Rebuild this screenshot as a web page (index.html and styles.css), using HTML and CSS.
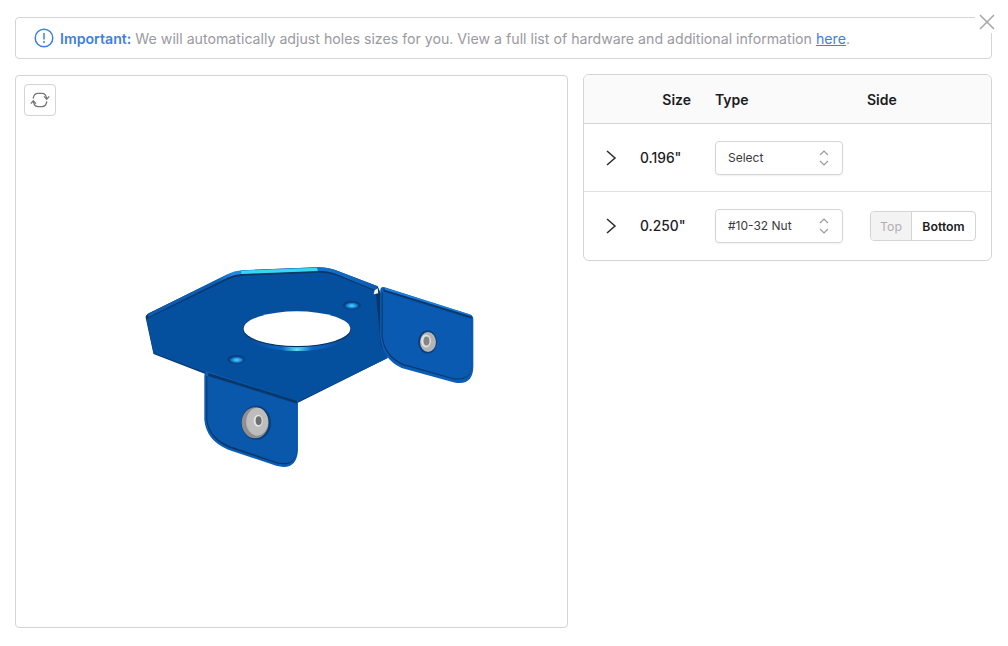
FILE: index.html
```html
<!DOCTYPE html>
<html lang="en">
	<head>
		<meta charset="UTF-8" />
		<title>Hardware</title>
		<link rel="stylesheet" href="styles.css">
	</head>

	<body>
		<!--close sits over the corner of the notice-->
		<button class="close" aria-label="Close">
			<svg viewBox="0 0 16 16" aria-hidden="true"><path d="M1 1 L15 15 M15 1 L1 15" /></svg>
		</button>

		<div class="notice">
			<svg class="notice__icon" viewBox="0 0 20 20" aria-hidden="true">
				<circle cx="10" cy="10" r="8.8" />
				<path d="M10 5.4 V11" />
				<path d="M10 13.6 V14.6" />
			</svg>
			<p class="notice__text">
				<strong>Important:</strong> We will automatically adjust holes sizes for you. View a full list of hardware and additional information <a href="#">here</a>.
			</p>
		</div>

		<div class="main">
			<div class="viewer">
				<button class="viewer__reset" aria-label="Reset view">
					<svg viewBox="0 0 20 20" aria-hidden="true">
						<path d="M3.2 8.6 C3.6 5 5.6 3.4 8 3.4 H12 C14.6 3.4 16.2 5.4 16.6 8.6" />
						<path d="M14 6.4 L16.7 9.2 L19.2 6.4" />
						<path d="M16.8 11.4 C16.4 15 14.4 16.6 12 16.6 H8 C5.4 16.6 3.8 14.6 3.4 11.4" />
						<path d="M6 13.6 L3.3 10.8 L0.8 13.6" />
					</svg>
				</button>

				<!--viewBox uses page coordinates so the part is easy to compare-->
				<svg class="viewer__part" viewBox="15 75 553 553" aria-hidden="true">
					<defs>
						<linearGradient id="rim" x1="0" x2="1" y1="0" y2="0">
							<stop offset="0" stop-color="#06478f" />
							<stop offset="0.36" stop-color="#0d68c4" />
							<stop offset="0.5" stop-color="#5ae0f6" />
							<stop offset="0.64" stop-color="#0d68c4" />
							<stop offset="1" stop-color="#06478f" />
						</linearGradient>
						<radialGradient id="dimple">
							<stop offset="0" stop-color="#5ad6f4" />
							<stop offset="0.6" stop-color="#1c8fe0" />
							<stop offset="1" stop-color="#0b4f9c" />
						</radialGradient>
						<linearGradient id="edge" x1="0" x2="1" y1="0" y2="0">
							<stop offset="0" stop-color="#0a5cb2" />
							<stop offset="0.3" stop-color="#0b5fb8" />
							<stop offset="0.37" stop-color="#2288e4" />
							<stop offset="0.75" stop-color="#1272d2" />
							<stop offset="1" stop-color="#0a5cb2" />
						</linearGradient>
					</defs>

					<!--main plate-->
					<path fill="#0a3768" d="M145 317 Q145 315 148 313 L226 275 Q234 271 243 270 L318 267 Q328 267 336 270 L378 286 L384 300 L388 358 L298 403 L205 374 L153 354 Z" />
					<path fill="url(#edge)" d="M147 314 L226 274.5 Q234 270.5 243 270 L318 267 Q328 267 336 270 L378 286 L376 290 L336 273.5 Q328 270.5 318 270.5 L243 273.5 Q234 274.5 228 277 L148 317 Z" />
					<path fill="#36d8ee" d="M241 270.4 L317 267.4 L318 270.6 L241 273.6 Z" />
					<path fill="#04509f" d="M146 319 L228 279 Q235 276 243 275.5 L318 272.5 Q328 272 336 275 L376 291 L381 345 L388 358 L298 402 L206 373 L153 353 Z" />
					<path fill="#fff" d="M375 290 L378 288 L378.5 293 L374 294 Z" />

					<!--large hole with its lit rim-->
					<ellipse cx="297" cy="331" rx="54" ry="20" fill="url(#rim)" />
					<ellipse cx="297" cy="329.2" rx="54" ry="18" fill="#07305f" />
					<ellipse cx="297" cy="328.6" rx="53.5" ry="17.4" fill="#fff" />

					<!--small holes-->
					<ellipse cx="236" cy="359.5" rx="9" ry="4.4" fill="#0a3f7e" />
					<ellipse cx="236.5" cy="360" rx="7" ry="3.2" fill="url(#dimple)" />
					<ellipse cx="352" cy="305" rx="9" ry="4.4" fill="#0a3f7e" />
					<ellipse cx="352" cy="305.5" rx="7" ry="3.2" fill="url(#dimple)" />

					<!--right tab-->
					<path fill="#0a5cb4" d="M380.5 291 Q380.5 286 385 287 L470 314 Q474 315 474 319 L474 366 Q474 386 455 382.5 L402 368 Q382 359 380.5 336 Z" />
					<path fill="#0a3768" d="M382 292 L472.5 319 L472.5 365 Q472.5 381 455 379.5 L403 365 Q384 357 382 336 Z" />
					<path fill="#0a5ab2" d="M383 292 L472.5 319 L472.5 365 Q472.5 380 455 378.6 L404 364 Q385 356 383 336 Z" />
					<path fill="#0a3768" d="M384 288 L472 315.5 L472.5 318.4 L384 291.4 Z" />
					<path fill="#1a80e2" d="M385 287.4 L471 314.4 L472 316.2 L385 289.6 Z" />
					<ellipse cx="428" cy="342" rx="9.5" ry="11.5" fill="#0a3f7e" />
					<ellipse cx="428.5" cy="342" rx="8" ry="10" fill="#b4b4b4" />
					<ellipse cx="426.5" cy="341" rx="5" ry="6.5" fill="#dedede" />
					<ellipse cx="427" cy="341" rx="3" ry="4.5" fill="#858585" />

					<!--lower tab-->
					<path fill="#0a5cb4" d="M204 376 Q204 371 209 372 L298 401 L298 450 Q297 471 277 466.5 L228 450 Q206 441 204 420 Z" />
					<path fill="#0a3768" d="M206 376 L297 404 L297 450 Q296 468 277 464 L229 448 Q208 439 206 420 Z" />
					<path fill="#0958ab" d="M207 376 L297 404 L297 450 Q296 467 277 462.6 L230 446.6 Q209 438 207 420 Z" />
					<path fill="#0a3768" d="M208 373 L297 401 L297 403.6 L208 376 Z" />
					<ellipse cx="256" cy="423" rx="15" ry="17" fill="#0a3f7e" />
					<ellipse cx="255" cy="423" rx="13.5" ry="15.5" fill="#8f8f8f" />
					<ellipse cx="257" cy="422" rx="11" ry="14" fill="#bdbdbd" />
					<ellipse cx="258" cy="421" rx="4.5" ry="6" fill="#e6e6e6" />
					<ellipse cx="258.5" cy="421" rx="3" ry="4.4" fill="#6f6f6f" />
				</svg>
			</div>

			<div class="holes">
				<div class="holes__row holes__row--head">
					<span></span>
					<span class="holes__size">Size</span>
					<span>Type</span>
					<span class="holes__side">Side</span>
				</div>

				<div class="holes__row">
					<svg class="chevron" viewBox="0 0 12 16" aria-hidden="true"><path d="M2 1 L10 8 L2 15" /></svg>
					<span class="holes__value">0.196"</span>
					<div class="select select--first">
						<span>Select</span>
						<svg class="select__arrows" viewBox="0 0 12 18" aria-hidden="true"><path d="M2 6 L6 2 L10 6 M2 12 L6 16 L10 12" /></svg>
					</div>
				</div>

				<div class="holes__row holes__row--last">
					<svg class="chevron" viewBox="0 0 12 16" aria-hidden="true"><path d="M2 1 L10 8 L2 15" /></svg>
					<span class="holes__value">0.250"</span>
					<div class="select">
						<span>#10-32 Nut</span>
						<svg class="select__arrows" viewBox="0 0 12 18" aria-hidden="true"><path d="M2 6 L6 2 L10 6 M2 12 L6 16 L10 12" /></svg>
					</div>
					<div class="toggle">
						<span class="toggle__item toggle__item--off">Top</span>
						<span class="toggle__item">Bottom</span>
					</div>
				</div>
			</div>
		</div>
	</body>
</html>
```

FILE: styles.css
```css
* {
	box-sizing: border-box;
}
body {
	margin: 0;
	padding: 17px 16px 0 15px;
	background-color: #fff;
	font-family: Inter, "Liberation Sans", sans-serif;
	color: #1c1c1f;
}
.close {
	appearance: none;
	position: absolute;
	top: 10px;
	right: 9px;
	width: 24px;
	height: 23px;
	padding: 0;
	border: 0;
	background: #fff;
	display: flex;
	align-items: center;
	justify-content: center;
}
.close svg {
	width: 16px;
	height: 16px;
	fill: none;
	stroke: #a6a6a6;
	stroke-width: 1.5;
}
.notice {
	display: flex;
	align-items: center;
	gap: 6px;
	height: 42px;
	padding-left: 18px;
	border: 1px solid #d4d4d4;
	border-radius: 4px;
}
.notice__icon {
	width: 20px;
	height: 20px;
	fill: none;
	stroke: #3f80e0;
	stroke-width: 1.5;
	stroke-linecap: round;
}
.notice__text {
	margin: 0;
	font-size: 14.16px;
	color: #9a9a9f;
	white-space: nowrap;
}
.notice__text strong {
	font-weight: 600;
	color: #3f80e0;
}
.notice__text a {
	color: #3f80e0;
}
.main {
	display: flex;
	align-items: flex-start;
	gap: 15px;
	margin-top: 15px;
}
.viewer {
	position: relative; /*reset button floats over the part*/
	flex: none;
	width: 553px;
	height: 553px;
	margin-top: 1px;
	border: 1px solid #d4d4d4;
	border-radius: 4px;
}
.viewer__part {
	display: block;
	width: 551px;
	height: 551px;
}
.viewer__reset {
	appearance: none;
	position: absolute;
	top: 8px;
	left: 8px;
	width: 32px;
	height: 32px;
	padding: 0;
	border: 1px solid #d4d4d4;
	border-radius: 4px;
	background: #fff;
	display: flex;
	align-items: center;
	justify-content: center;
}
.viewer__reset svg {
	width: 20px;
	height: 20px;
	fill: none;
	stroke: #777;
	stroke-width: 1.3;
}
.holes {
	flex: none;
	width: 409px;
	border: 1px solid #d4d4d4;
	border-radius: 6px;
	overflow: hidden;
}
.holes__row {
	display: grid;
	grid-template-columns: 56px 75px 128px 1fr;
	align-items: center;
	height: 68px;
	border-bottom: 1px solid #e2e2e2;
	font-size: 14px;
}
.holes__row--head {
	height: 49px;
	border-bottom-color: #d4d4d4;
	background-color: #fafafa;
	font-weight: 600;
}
.holes__row--last {
	border-bottom: 0;
}
.holes__size {
	grid-column: 2;
	text-align: right;
	padding-right: 24px;
}
.holes__side {
	padding-left: 24px;
}
.holes__value {
	font-size: 13.8px;
	font-weight: 500;
}
.chevron {
	justify-self: start;
	margin-left: 21px;
	width: 12px;
	height: 16px;
	fill: none;
	stroke: #2a2a2a;
	stroke-width: 1.5;
}
.select {
	display: flex;
	align-items: center;
	justify-content: space-between;
	height: 34px;
	padding: 0 12px;
	border: 1px solid #d4d4d4;
	border-radius: 4px;
	box-shadow: 0 1px 2px rgba(0, 0, 0, 0.06);
	font-size: 12px;
	line-height: 14px;
	color: #3a3a3e;
}
.select--first {
	margin-top: 1px; /*row above has a border, keeps the box on a whole pixel*/
}
.select__arrows {
	width: 12px;
	height: 18px;
	fill: none;
	stroke: #9a9a9a;
	stroke-width: 1.2;
}
.toggle {
	display: flex;
	height: 30px;
	margin-left: 27px;
	width: 106px;
	border: 1px solid #d4d4d4;
	border-radius: 4px;
	overflow: hidden;
	font-size: 12.3px;
	font-weight: 600;
}
.toggle__item {
	flex: 1;
	display: flex;
	align-items: center;
	justify-content: center;
}
.toggle__item--off {
	flex: none;
	width: 41px;
	border-right: 1px solid #d4d4d4;
	background-color: #f3f3f4;
	color: #b0b0b4;
	font-weight: 400;
}
```
